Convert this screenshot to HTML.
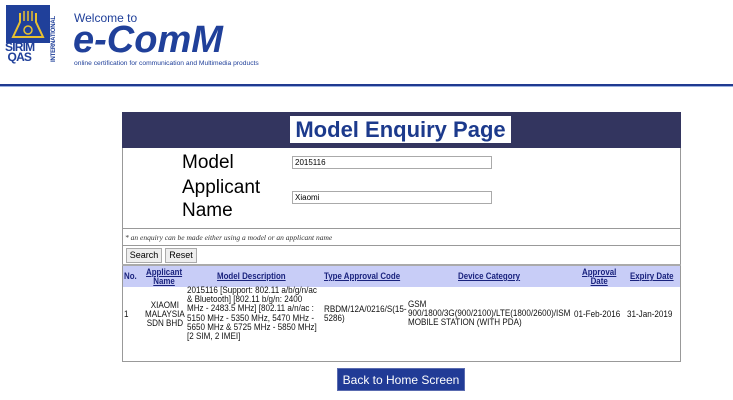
<!DOCTYPE html>
<html><head><meta charset="utf-8"><style>
*{margin:0;padding:0;box-sizing:border-box}
body{width:733px;height:400px;background:#fff;position:relative;overflow:hidden;font-family:"Liberation Sans",Arial,sans-serif;color:#000}
.a{position:absolute}
.th{position:absolute;top:268px;font-size:9px;font-weight:bold;color:#1a237e;text-decoration:underline;text-align:center;line-height:9px;transform:scaleX(0.88);transform-origin:0 0;white-space:nowrap}
.td{position:absolute;font-size:9.5px;line-height:9.2px;color:#111;transform:scaleX(0.85);transform-origin:0 0;white-space:nowrap}
input{position:absolute;border:1px solid #aaa;font:8px "Liberation Sans",sans-serif;padding-left:2px;height:13px;background:#fff}
.btn{position:absolute;top:248px;height:15px;border:1px solid #aaa;background:#eee;font-size:9px;line-height:13px;text-align:center}
</style></head><body>
<!-- logo -->
<div class="a" style="left:6px;top:5px;width:44px;height:38px;background:#20409a"></div>
<svg class="a" style="left:6px;top:5px" width="44" height="38" viewBox="0 0 44 38">
<path d="M14 8 V17 L7 32 H37 L30 17 V8" fill="none" stroke="#e8c030" stroke-width="2"/>
<path d="M18 6 V16 M22 6 V16 M26 6 V16" stroke="#e8c030" stroke-width="1.5"/>
<circle cx="22" cy="25" r="4" fill="none" stroke="#e8c030" stroke-width="1.5"/>
</svg>
<div class="a" style="left:5px;top:42px;font-size:12px;font-weight:bold;color:#20409a;line-height:10px;letter-spacing:-0.8px">SIRIM<br>&nbsp;QAS</div>
<div class="a" style="left:51px;top:62px;transform:rotate(-90deg);transform-origin:0 0;font-size:6px;font-weight:bold;color:#20409a;white-space:nowrap;letter-spacing:-0.2px">INTERNATIONAL</div>
<div class="a" style="left:74px;top:11px;font-size:12px;color:#20409a">Welcome to</div>
<div class="a" style="left:73px;top:20px;font-size:38px;font-weight:bold;font-style:italic;color:#20409a;line-height:40px">e-ComM</div>
<div class="a" style="left:74px;top:60px;font-size:6.7px;color:#20409a">online certification for communication and Multimedia products</div>
<div class="a" style="left:0;top:84px;width:733px;height:2px;background:#203a90"></div>
<div class="a" style="left:0;top:86px;width:733px;height:1px;background:#9ab0e0"></div>
<!-- box -->
<div class="a" style="left:122px;top:112px;width:559px;height:250px;border:1px solid #999"></div>
<div class="a" style="left:122px;top:112px;width:559px;height:36px;background:#33355f"></div>
<div class="a" style="left:290px;top:116px;width:221px;height:27px;background:#fff;color:#1c3a8c;font-size:22px;font-weight:bold;text-align:center;line-height:27px">Model Enquiry Page</div>
<div class="a" style="left:182px;top:151px;font-size:19px;line-height:23px">Model</div>
<div class="a" style="left:182px;top:176px;font-size:19px;line-height:23px">Applicant<br>Name</div>
<input style="left:292px;top:156px;width:200px" value="2015116">
<input style="left:292px;top:191px;width:200px" value="Xiaomi">
<div class="a" style="left:122px;top:228px;width:559px;height:1px;background:#999"></div>
<div class="a" style="left:125px;top:233px;font-family:'Liberation Serif',serif;font-style:italic;font-size:7.5px;color:#333">* an enquiry can be made either using a model or an applicant name</div>
<div class="a" style="left:122px;top:245px;width:559px;height:1px;background:#999"></div>
<div class="btn" style="left:126px;width:36px">Search</div>
<div class="btn" style="left:165px;width:32px">Reset</div>
<div class="a" style="left:122px;top:264px;width:559px;height:2px;background:#aaa"></div>
<div class="a" style="left:123px;top:266px;width:557px;height:21px;background:#c8cdf7"></div>
<div class="th" style="left:124px;top:272px;text-align:left;text-decoration:none">No.</div>
<div class="th" style="left:146px">Applicant<br>Name</div>
<div class="th" style="left:217px;top:272px">Model Description</div>
<div class="th" style="left:324px;top:272px">Type Approval Code</div>
<div class="th" style="left:458px;top:272px">Device Category</div>
<div class="th" style="left:582px">Approval<br>Date</div>
<div class="th" style="left:630px;top:272px">Expiry Date</div>
<div class="td" style="left:124px;top:310px">1</div>
<div class="td" style="left:145px;top:301px;text-align:center">XIAOMI<br>MALAYSIA<br>SDN BHD</div>
<div class="td" style="left:187px;top:286px">2015116 [Support: 802.11 a/b/g/n/ac<br>&amp; Bluetooth] [802.11 b/g/n: 2400<br>MHz - 2483.5 MHz] [802.11 a/n/ac :<br>5150 MHz - 5350 MHz, 5470 MHz -<br>5650 MHz &amp; 5725 MHz - 5850 MHz]<br>[2 SIM, 2 IMEI]</div>
<div class="td" style="left:324px;top:305px">RBDM/12A/0216/S(15-<br>5286)</div>
<div class="td" style="left:408px;top:300px">GSM<br>900/1800/3G(900/2100)/LTE(1800/2600)/ISM<br>MOBILE STATION (WITH PDA)</div>
<div class="td" style="left:574px;top:310px">01-Feb-2016</div>
<div class="td" style="left:627px;top:310px">31-Jan-2019</div>
<div class="a" style="left:337px;top:368px;width:128px;height:23px;background:#213b96;color:#fff;font-size:12px;line-height:23px;text-align:center;border:1px solid #5a6bb0">Back to Home Screen</div>
</body></html>
